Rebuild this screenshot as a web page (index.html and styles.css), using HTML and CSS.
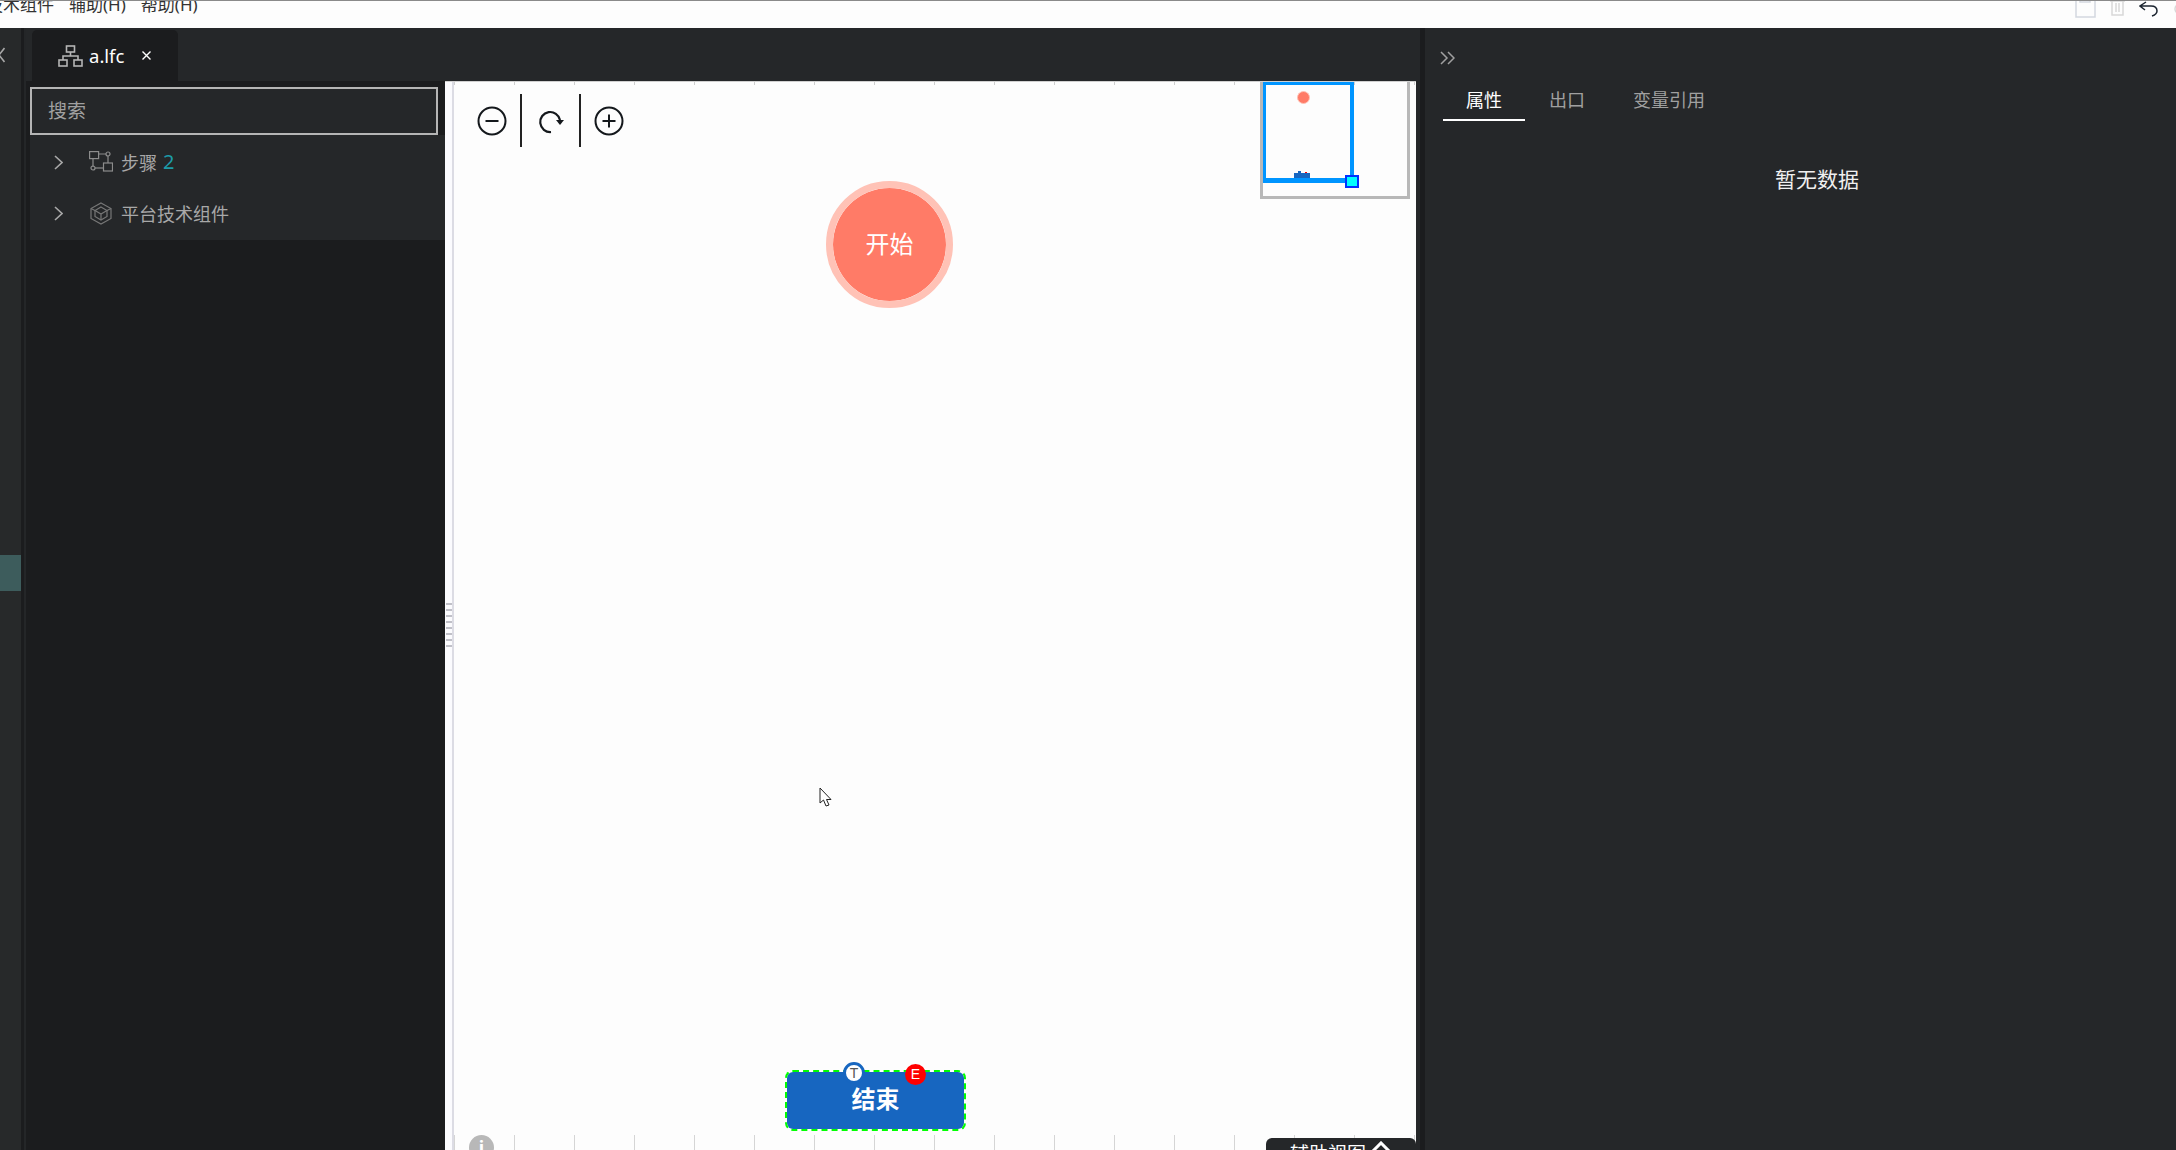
FILE: index.html
```html
<!DOCTYPE html>
<html lang="zh-CN">
<head>
  <meta charset="UTF-8">
  <title>a.lfc</title>
  <link rel="stylesheet" href="styles.css">
</head>
<body>
  <div class="menubar">
    <div class="menu-items">
      <span class="menu-first">技术组件</span>
      <span>辅助(H)</span>
      <span>帮助(H)</span>
    </div>
    <div class="menu-tools">
      <svg width="21" height="22" viewBox="0 0 21 22" fill="none" stroke="#d3d8e0" stroke-width="1.5"><path d="M1 -2v22h19V3l-4-5M5 -2v7h10v-7"/></svg>
      <svg width="15" height="22" viewBox="0 0 15 22" fill="none" stroke="#d8d8d8" stroke-width="1.5"><path d="M0 4h15M2 4v14h11V4M6 6v9M9 6v9"/></svg>
      <svg width="19" height="22" viewBox="0 0 19 22" fill="none" stroke="#1c2530" stroke-width="1.5"><path d="M7 5L1 9l5 4M1 9h11c4 0 6 2 6 5s-2 4-5 5"/></svg>
      <svg width="16" height="22" viewBox="0 0 16 22" fill="none" stroke="#d8d8d8" stroke-width="1.5"><circle cx="8" cy="12" r="5"/></svg>
    </div>
  </div>

  <div class="workspace">
    <div class="rail">
      <svg class="rail-back" width="6" height="16" viewBox="0 0 6 16" fill="none" stroke="#a8a8a8" stroke-width="1.6"><path d="M5.5 1L0 8l5.5 7"/></svg>
      <div class="rail-active"></div>
    </div>

    <div class="center">
      <div class="tabbar">
        <div class="tab">
          <svg width="25" height="22" viewBox="0 0 25 22" fill="none" stroke="#b5b5b5" stroke-width="1.6"><rect x="8.5" y="1" width="8" height="6"/><rect x="1" y="15" width="8" height="6"/><rect x="16" y="15" width="8" height="6"/><path d="M12.5 7v4M5 15v-4h15v4"/></svg>
          <span class="tab-name">a.lfc</span>
          <svg class="tab-close" width="9" height="9" viewBox="0 0 9 9" stroke="#fff" stroke-width="1.4"><path d="M0.5 0.5l8 8M8.5 0.5l-8 8"/></svg>
        </div>
      </div>

      <div class="editor">
        <div class="sidebar">
          <div class="search">搜索</div>
          <div class="tree">
            <div class="tree-row">
              <svg class="chevron" width="9" height="15" viewBox="0 0 9 15" fill="none" stroke="#a8a8a8" stroke-width="1.6"><path d="M1 1l7 6.5L1 14"/></svg>
              <svg width="24" height="21" viewBox="0 0 24 21" fill="none" stroke="#8c8c8c" stroke-width="1.2"><rect x="0.6" y="0.6" width="9" height="7"/><circle cx="19" cy="3" r="2"/><path d="M10 3h7M19 5v7M4 8v8"/><circle cx="4" cy="17" r="2"/><path d="M6 17h8"/><rect x="14.5" y="12" width="9" height="8"/></svg>
              <span class="tree-label">步骤</span>
              <span class="tree-count">2</span>
            </div>
            <div class="tree-row">
              <svg class="chevron" width="9" height="15" viewBox="0 0 9 15" fill="none" stroke="#a8a8a8" stroke-width="1.6"><path d="M1 1l7 6.5L1 14"/></svg>
              <svg class="tree-hex" width="24" height="23" viewBox="0 0 24 23" fill="none" stroke="#777" stroke-width="1.2"><path d="M12 1l10 5.5v10L12 22 2 16.500v-10z"/><path d="M12 5l6 3.500v6L12 18l-6-3.500v-6z"/><path d="M6 8.500l6 3.500 6-3.500M12 12v6M2 6.500l4 2M22 6.500l-4 2"/></svg>
              <span class="tree-label">平台技术组件</span>
            </div>
          </div>
        </div>

        <div class="canvas">
          <div class="gutter">
            <i></i><i></i><i></i><i></i><i></i><i></i><i></i><i></i>
          </div>

          <div class="zoom-tools">
            <svg width="30" height="30" viewBox="0 0 30 30" fill="none" stroke="#14181c" stroke-width="2"><circle cx="15" cy="15" r="13.500"/><path d="M8.500 15h13"/></svg>
            <div class="zoom-sep"></div>
            <svg class="zoom-rotate" width="30" height="26" viewBox="-2 0 30 26" fill="none" stroke="#14181c" stroke-width="2.200"><path d="M22 12a10 10 0 1 0-9 12"/><path d="M18 12h8l-4 5z" fill="#14181c" stroke="none"/></svg>
            <div class="zoom-sep"></div>
            <svg width="30" height="30" viewBox="0 0 30 30" fill="none" stroke="#14181c" stroke-width="2"><circle cx="15" cy="15" r="13.500"/><path d="M8.500 15h13M15 8.500v13"/></svg>
          </div>

          <div class="node-start">开始</div>

          <div class="node-end">
            结束
            <span class="badge-t">T</span>
            <span class="badge-e">E</span>
          </div>

          <div class="minimap">
            <div class="mini-view"></div>
            <div class="mini-handle"></div>
            <div class="mini-start"></div>
            <div class="mini-end"></div>
            <div class="mini-bump"></div>
            <div class="mini-dot"></div>
          </div>

          <div class="info-icon">i</div>

          <div class="helper">
            <span>辅助视图</span>
            <svg width="20" height="12" viewBox="0 0 20 12" fill="none" stroke="#fff" stroke-width="3"><path d="M1 11l9-9 9 9"/></svg>
          </div>

          <svg class="cursor" width="13" height="20" viewBox="0 0 13 20" fill="#fff" stroke="#222" stroke-width="1"><path d="M1 1v15l3.500-3 2.500 6 3-1-2.500-5.500H12z"/></svg>
        </div>
      </div>
    </div>

    <div class="panel">
      <svg class="panel-collapse" width="15" height="14" viewBox="0 0 15 14" fill="none" stroke="#a0a0a0" stroke-width="1.500"><path d="M1 1l6 6-6 6M8 1l6 6-6 6"/></svg>
      <div class="panel-tabs">
        <div class="panel-tab active">属性</div>
        <div class="panel-tab">出口</div>
        <div class="panel-tab">变量引用</div>
      </div>
      <div class="empty">暂无数据</div>
    </div>
  </div>
</body>
</html>
```

FILE: styles.css
```css
html, body {
  margin: 0;
  height: 100%;
  overflow: hidden;
}
body {
  font-family: "Noto Sans", "Noto Sans CJK SC", sans-serif;
  background: #252729;
}
svg {
  display: block;
  flex: none;
}

/* top menu, cut off by the window edge */
.menubar {
  display: flex;
  justify-content: space-between;
  height: 27px;
  background: #fdfdfd;
  border-top: 1px solid #8a8a8a;
  overflow: hidden;
}
.menu-items {
  display: flex;
  gap: 15px;
  margin-left: -14px;
  font-size: 17px;
  line-height: 8px;
  color: #333;
  white-space: nowrap;
}
.menu-tools {
  display: flex;
  gap: 14px;
  margin: -4px -12px 0 0;
  height: 22px;
}

.workspace {
  display: flex;
  height: 1122px;
}

.rail {
  width: 21px;
  flex: none;
  background: #27292a;
  border-right: 3px solid #1b1c1e;
  box-shadow: 2px 0 0 #242628;
  margin-right: 2px;
}
.rail-back {
  margin-top: 19px;
  margin-left: -1px;
}
.rail-active {
  margin-top: 492px;
  height: 36px;
  background: #3d5c5c;
}

.center {
  width: 1390px;
  flex: none;
  display: flex;
  flex-direction: column;
}
.tabbar {
  height: 53px;
  flex: none;
  padding: 2px 0 0 6px;
  box-sizing: border-box;
  background: #252729;
}
.tab {
  display: flex;
  align-items: center;
  width: 146px;
  height: 51px;
  padding-left: 26px;
  box-sizing: border-box;
  background: #1b1c1e;
  border-radius: 5px 5px 0 0;
}
.tab-name {
  margin-left: 6px;
  font-size: 18.5px;
  color: #fff;
}
.tab-close {
  margin-left: 18px;
}

.editor {
  display: flex;
  flex: 1;
  min-height: 0;
}

.sidebar {
  width: 419px;
  flex: none;
  padding: 6px 0 0 4px;
  box-sizing: border-box;
  background: #1b1c1e;
}
.search {
  width: 408px;
  height: 48px;
  padding-left: 16px;
  box-sizing: border-box;
  border: 2px solid #b5b5b5;
  background: #252729;
  color: #a0a0a0;
  font-size: 19px;
  line-height: 44px;
}
.tree {
  height: 105px;
  padding-top: 1px;
  box-sizing: border-box;
  background: #252729;
}
.tree-row {
  display: flex;
  align-items: center;
  height: 51px;
  padding-left: 24px;
}
.chevron {
  margin: 2px 26px 0 0;
}
.tree-hex {
  margin-top: 2px;
}
.tree-label {
  margin-left: 8px;
  font-size: 18px;
  color: #a8a8a8;
}
.tree-count {
  margin-left: 6px;
  font-size: 20px;
  line-height: 24px;
  color: #1d9ba8;
}

.canvas {
  position: relative;
  width: 971px;
  flex: none;
  box-sizing: border-box;
  overflow: hidden;
  background-color: #fdfdfd;
  border-top: 1px solid #d0d0d0;
  background-image:
    linear-gradient(to right, #d5d5d5 1px, transparent 1px),
    linear-gradient(to right, #cfcfcf 1px, transparent 1px);
  background-size: 60px 15px, 60px 3px;
  background-position: 9px 100%, 9px 0;
  background-repeat: repeat-x;
}
.gutter {
  position: absolute;
  left: 0;
  top: 0;
  bottom: 0;
  width: 7px;
  display: flex;
  flex-direction: column;
  align-items: flex-end;
  gap: 4px;
  padding-top: 521px;
  background: #fbfbfe;
  border-right: 2px solid #dcdce4;
}
.gutter i {
  width: 6px;
  height: 2px;
  background: #c0c0c8;
}

.zoom-tools {
  display: flex;
  align-items: center;
  gap: 13px;
  height: 53px;
  margin: 12px 0 0 32px;
}
.zoom-sep {
  width: 2px;
  height: 53px;
  background: #222;
}
.zoom-rotate {
  margin-left: 1px;
}

.node-start {
  position: absolute;
  left: 381px;
  top: 99px;
  width: 127px;
  height: 127px;
  box-sizing: border-box;
  border: 7px solid #ffc2b6;
  border-radius: 50%;
  background: #ff7b67;
  background-clip: padding-box;
  color: #fff;
  font-size: 24px;
  line-height: 112px;
  text-align: center;
}
.node-end {
  position: absolute;
  left: 340px;
  top: 988px;
  width: 181px;
  height: 61px;
  box-sizing: border-box;
  border: 2px dashed #00ff00;
  border-radius: 8px;
  background: #1766c0;
  background-clip: padding-box;
  color: #fff;
  font-size: 24px;
  font-weight: 700;
  line-height: 54px;
  text-align: center;
}
.badge-t, .badge-e {
  position: absolute;
  border-radius: 50%;
  font-family: "Liberation Sans", sans-serif;
  font-size: 14px;
  font-weight: 400;
  text-align: center;
}
.badge-t {
  left: 56px;
  top: -10px;
  width: 22px;
  height: 22px;
  box-sizing: border-box;
  border: 3px solid #1766c0;
  background: #fff;
  color: #555;
  line-height: 16px;
}
.badge-e {
  left: 118px;
  top: -8px;
  width: 21px;
  height: 21px;
  background: #ff0000;
  color: #fff;
  line-height: 20px;
}

.minimap {
  position: absolute;
  left: 815px;
  top: -1px;
  width: 150px;
  height: 118px;
  box-sizing: border-box;
  border: 3px solid #b8b8b8;
  border-top: 1px solid #b8b8b8;
}
.mini-view {
  position: absolute;
  left: 0;
  top: 0;
  width: 91px;
  height: 101px;
  box-sizing: border-box;
  border-style: solid;
  border-color: #0095ff;
  border-width: 3px 4px 5px 3px;
}
.mini-handle {
  position: absolute;
  left: 82px;
  top: 93px;
  width: 14px;
  height: 13px;
  box-sizing: border-box;
  border: 2px solid #0033ff;
  background: #00ffff;
}
.mini-start {
  position: absolute;
  left: 34px;
  top: 9px;
  width: 11px;
  height: 11px;
  border: 1px solid #ffc2b6;
  border-radius: 50%;
  background: #ff7b67;
}
.mini-end {
  position: absolute;
  left: 31px;
  top: 91px;
  width: 16px;
  height: 5px;
  background: #1766c0;
}
.mini-bump {
  position: absolute;
  left: 35px;
  top: 89px;
  width: 3px;
  height: 2px;
  background: #1766c0;
}
.mini-dot {
  position: absolute;
  left: 42px;
  top: 90px;
  width: 2px;
  height: 1px;
  background: #ff0000;
}

.info-icon {
  position: absolute;
  left: 24px;
  top: 1053px;
  width: 25px;
  height: 25px;
  border-radius: 50%;
  background: #b8b8b8;
  color: #fff;
  font-size: 18px;
  font-weight: 700;
  line-height: 25px;
  text-align: center;
}

.helper {
  position: absolute;
  right: 0;
  bottom: -12px;
  width: 150px;
  height: 24px;
  padding: 3px 0 0 24px;
  box-sizing: border-box;
  display: flex;
  gap: 5px;
  background: #252729;
  border-radius: 6px 6px 0 0;
  color: #fff;
  font-size: 19px;
  line-height: 26px;
  white-space: nowrap;
}

.cursor {
  position: absolute;
  left: 374px;
  top: 705px;
}

/* right properties panel */
.panel {
  flex: 1;
  margin-left: 4px;
  padding-left: 18px;
  background: #252729;
  border-left: 5px solid #1b1c1e;
}
.panel-collapse {
  margin: 23px 0 0 -3px;
}
.panel-tabs {
  display: flex;
  margin-top: 17px;
}
.panel-tab {
  height: 39px;
  padding: 0 24px;
  box-sizing: border-box;
  font-size: 18px;
  line-height: 36px;
  color: #a0a0a0;
}
.panel-tab.active {
  width: 82px;
  text-align: center;
  padding: 0;
  color: #fff;
  border-bottom: 2px solid #fff;
}
.empty {
  margin: 43px 0 0 332px;
  color: #f0f0f0;
  font-size: 21px;
  line-height: 30px;
}
```
